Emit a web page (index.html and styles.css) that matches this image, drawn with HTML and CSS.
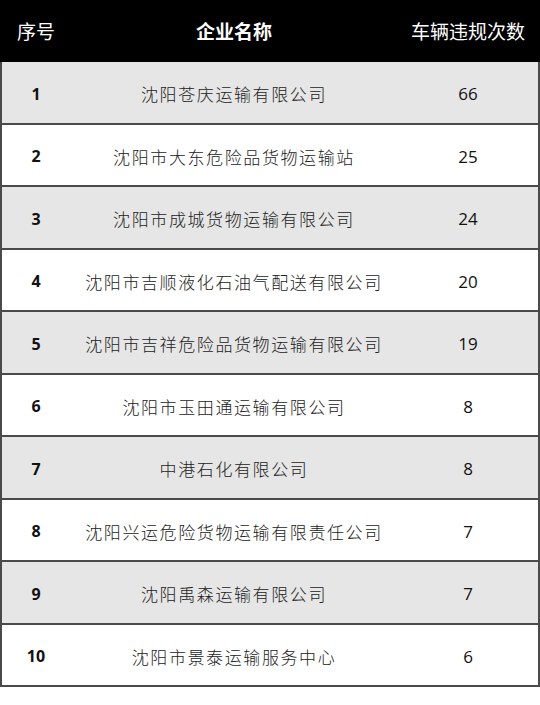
FILE: index.html
```html
<!DOCTYPE html>
<html lang="zh">
<head>
<meta charset="utf-8">
<link rel="stylesheet" href="styles.css">
</head>
<body>
<div class="table">
  <div class="head">
    <div class="c1">序号</div>
    <div class="c2 bold">企业名称</div>
    <div class="c3">车辆违规次数</div>
  </div>
  <div class="row odd"><div class="c1 num">1</div><div class="c2">沈阳苍庆运输有限公司</div><div class="c3 n">66</div></div>
  <div class="row"><div class="c1 num">2</div><div class="c2">沈阳市大东危险品货物运输站</div><div class="c3 n">25</div></div>
  <div class="row odd"><div class="c1 num">3</div><div class="c2">沈阳市成城货物运输有限公司</div><div class="c3 n">24</div></div>
  <div class="row"><div class="c1 num">4</div><div class="c2">沈阳市吉顺液化石油气配送有限公司</div><div class="c3 n">20</div></div>
  <div class="row odd"><div class="c1 num">5</div><div class="c2">沈阳市吉祥危险品货物运输有限公司</div><div class="c3 n">19</div></div>
  <div class="row"><div class="c1 num">6</div><div class="c2">沈阳市玉田通运输有限公司</div><div class="c3 n">8</div></div>
  <div class="row odd"><div class="c1 num">7</div><div class="c2">中港石化有限公司</div><div class="c3 n">8</div></div>
  <div class="row"><div class="c1 num">8</div><div class="c2">沈阳兴运危险货物运输有限责任公司</div><div class="c3 n">7</div></div>
  <div class="row odd"><div class="c1 num">9</div><div class="c2">沈阳禹森运输有限公司</div><div class="c3 n">7</div></div>
  <div class="row"><div class="c1 num">10</div><div class="c2">沈阳市景泰运输服务中心</div><div class="c3 n">6</div></div>
</div>
</body>
</html>
```
FILE: styles.css
```css
html, body {
  margin: 0;
  padding: 0;
  background: #fff;
}
body {
  font-family: "Noto Sans CJK SC", "Noto Sans", sans-serif;
  color: #222;
}
.table {
  width: 540px;
  box-sizing: border-box;
  border-left: 2px solid #4a4a4a;
  border-right: 2px solid #4a4a4a;
}
.head, .row {
  display: grid;
  grid-template-columns: 68px 328px 1fr;
  align-items: center;
}
.head {
  height: 62px;
  background: #000;
  color: #fff;
  font-size: 19px;
  margin-left: -2px;
  margin-right: -2px;
  padding-left: 2px;
  padding-right: 2px;
  padding-bottom: 1px;
  box-sizing: border-box;
}
.row {
  height: 62.5px;
  box-sizing: border-box;
  border-bottom: 2px solid #4a4a4a;
  padding-top: 3px;
  background: #fff;
  font-size: 17px;
  font-weight: 300;
  letter-spacing: 1.6px;
}
.row.odd {
  background: #e6e6e6;
}
.c1, .c2, .c3 {
  text-align: center;
}
.bold {
  font-weight: 700;
}
.num {
  font-family: "Open Sans", "Liberation Sans", sans-serif;
  font-weight: 700;
  font-size: 16px;
  letter-spacing: 0;
  color: #111;
}
.n {
  font-family: "Open Sans", "Liberation Sans", sans-serif;
  font-weight: 400;
  font-size: 17px;
  letter-spacing: 0;
  color: #111;
}
```
